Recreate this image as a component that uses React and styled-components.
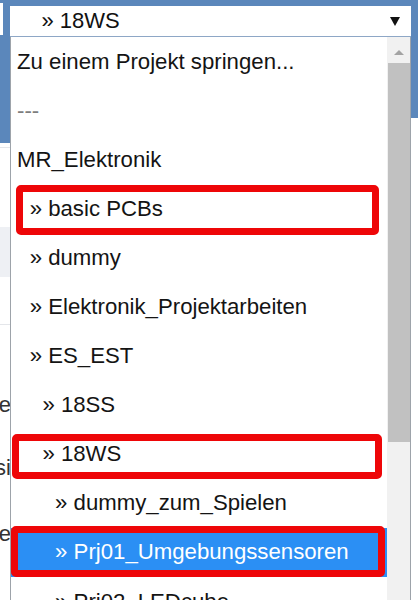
import React from "react";
import styled, { createGlobalStyle } from "styled-components";

const Global = createGlobalStyle`
  html, body { margin: 0; padding: 0; }
  body {
    width: 418px;
    height: 600px;
    overflow: hidden;
    background: #ffffff;
    font-family: "Liberation Sans", Arial, sans-serif;
  }
`;

const Page = styled.div`
  position: relative;
  width: 418px;
  height: 600px;
  overflow: hidden;
  display: flex;
  background: #ffffff;
`;

const LeftStrip = styled.div`
  width: 11px;
  flex: none;
  display: flex;
  flex-direction: column;
  overflow: hidden;
`;

const LeftBanner = styled.div`
  height: 143px;
  flex: none;
  background: #5b87bb;
  display: flex;
  flex-direction: column;
  padding-top: 3px;
  box-sizing: border-box;
`;

const MiniInput = styled.div`
  width: 3px;
  height: 32px;
  background: #ffffff;
`;

const BgRow = styled.div`
  height: ${(p) => p.$h}px;
  flex: none;
  background: ${(p) => (p.$gray ? "#eef0f4" : "#ffffff")};
  border-bottom: ${(p) => (p.$line ? "1px solid #e4e6ea" : "none")};
  box-sizing: border-box;
  display: flex;
  align-items: center;
  justify-content: flex-end;
  font-size: 22px;
  color: #333;
  white-space: nowrap;
`;

const MainBg = styled.div`
  flex: 1;
  display: flex;
  flex-direction: column;
`;

const MainBanner = styled.div`
  height: 118px;
  flex: none;
  background: #5b87bb;
`;

const Dropdown = styled.div`
  position: absolute;
  top: 6px;
  left: 10px;
  width: 401px;
  display: flex;
  flex-direction: column;
  z-index: 2;
`;

const SelectBox = styled.div`
  height: 31px;
  box-sizing: border-box;
  background: #ffffff;
  border-bottom: 1px solid #8ea7c6;
  display: flex;
  align-items: center;
  padding-left: ${6 + 2 * 12.7}px;
  padding-right: 11px;
  font-size: 22px;
  color: #111;
`;

const SelectText = styled.span`
  flex: 1;
  white-space: pre;
`;

const Caret = styled.span`
  width: 0;
  height: 0;
  border-left: 5px solid transparent;
  border-right: 5px solid transparent;
  border-top: 9px solid #111;
`;

const ListPanel = styled.div`
  height: 570px;
  display: flex;
  background: #ffffff;
  border-left: 1px solid #9da3aa;
  border-right: 1px solid #9da3aa;
  overflow: hidden;
`;

const Options = styled.div`
  flex: 1;
  display: flex;
  flex-direction: column;
`;

const Option = styled.div`
  position: relative;
  flex: none;
  height: 49.1px;
  display: flex;
  align-items: center;
  padding-left: ${(p) => 6 + p.$level * 12.7}px;
  font-size: 22.2px;
  white-space: nowrap;
  background: ${(p) => (p.$selected ? "#2b8ff4" : "transparent")};
  color: ${(p) => (p.$selected ? "#ffffff" : p.$muted ? "#7d7d7d" : "#141414")};

  ${(p) =>
    p.$mark &&
    `
    &::after {
      content: "";
      position: absolute;
      top: ${p.$mark.t}px;
      right: ${p.$mark.r}px;
      bottom: ${p.$mark.b}px;
      left: ${p.$mark.l}px;
      border: 7px solid #ee0608;
      border-radius: 5px;
      pointer-events: none;
    }
  `}
`;

const ScrollTrack = styled.div`
  width: 23px;
  flex: none;
  background: #f1f1f1;
  display: flex;
  flex-direction: column;
  align-items: center;
`;

const ScrollUp = styled.div`
  height: 26px;
  width: 100%;
  display: flex;
  align-items: center;
  justify-content: center;
  padding-top: 4px;
  box-sizing: border-box;
`;

const UpTriangle = styled.span`
  width: 0;
  height: 0;
  border-left: 5px solid transparent;
  border-right: 5px solid transparent;
  border-bottom: 5px solid #a3a3a3;
`;

const Thumb = styled.div`
  width: 22px;
  height: 379px;
  background: #c1c1c1;
`;

const options = [
  { label: "Zu einem Projekt springen...", level: 0 },
  { label: "---", level: 0, muted: true },
  { label: "MR_Elektronik", level: 0 },
  { label: "» basic PCBs", level: 1, mark: { t: 1, r: 8, b: -2, l: 5 } },
  { label: "» dummy", level: 1 },
  { label: "» Elektronik_Projektarbeiten", level: 1 },
  { label: "» ES_EST", level: 1 },
  { label: "» 18SS", level: 2 },
  { label: "» 18WS", level: 2, mark: { t: 4, r: 5, b: 0, l: 1 } },
  { label: "» dummy_zum_Spielen", level: 3 },
  { label: "» Prj01_Umgebungssensoren", level: 3, selected: true, mark: { t: -2, r: 2, b: 0, l: 0 } },
  { label: "» Prj02_LEDcube", level: 3 },
];

const bgRows = [
  { h: 5, line: true },
  { h: 79 },
  { h: 50, gray: true },
  { h: 48, line: true },
  { h: 58 },
  { h: 44, text: "e" },
  { h: 20 },
  { h: 42, text: "si" },
  { h: 24 },
  { h: 42, text: "e" },
  { h: 60 },
];

export default function App() {
  return (
    <>
      <Global />
      <Page>
        <LeftStrip>
          <LeftBanner>
            <MiniInput />
          </LeftBanner>
          {bgRows.map((r, i) => (
            <BgRow key={i} $h={r.h} $gray={r.gray} $line={r.line}>
              {r.text}
            </BgRow>
          ))}
        </LeftStrip>
        <MainBg>
          <MainBanner />
        </MainBg>

        <Dropdown>
          <SelectBox>
            <SelectText>» 18WS</SelectText>
            <Caret />
          </SelectBox>
          <ListPanel>
            <Options>
              {options.map((o, i) => (
                <Option
                  key={i}
                  $level={o.level}
                  $selected={o.selected}
                  $muted={o.muted}
                  $mark={o.mark}
                >
                  {o.label}
                </Option>
              ))}
            </Options>
            <ScrollTrack>
              <ScrollUp>
                <UpTriangle />
              </ScrollUp>
              <Thumb />
            </ScrollTrack>
          </ListPanel>
        </Dropdown>
      </Page>
    </>
  );
}
